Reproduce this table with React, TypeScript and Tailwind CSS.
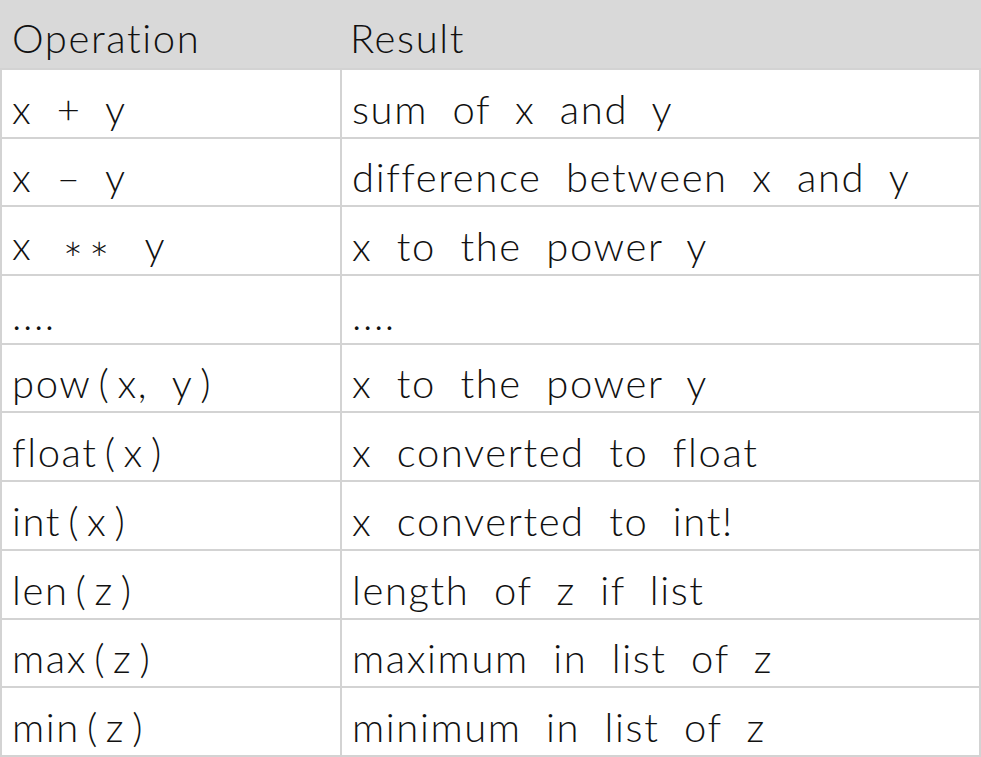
import React from 'react';

// the reference font sets brackets off with extra room
const spaced = (s: string) =>
  s.split(/([()])/).map((part, i) =>
    part === '(' || part === ')' ? (
      <span key={i} className="mx-[7px]">
        {part}
      </span>
    ) : (
      part
    )
  );

const rows: [React.ReactNode, string][] = [
  ['x + y', 'sum of x and y'],
  ['x – y', 'difference between x and y'],
  [
    <>
      x <span className="relative top-[17px] mx-[6px] text-[48px] tracking-[0.12em]">**</span> y
    </>,
    'x to the power y',
  ],
  ['....', '....'],
  [spaced('pow(x, y)'), 'x to the power y'],
  [spaced('float(x)'), 'x converted to float'],
  [spaced('int(x)'), 'x converted to int!'],
  [spaced('len(z)'), 'length of z if list'],
  [spaced('max(z)'), 'maximum in list of z'],
  [spaced('min(z)'), 'minimum in list of z'],
];

const cell = 'bg-white flex items-end pl-[10px] pb-[8px] leading-none whitespace-pre';

export default function App() {
  return (
    <div className="w-[981px] h-[757px] bg-white">
      <div
        className="w-[981px] h-[757px] bg-[#d3d3d3] px-[2px] pb-[2px] grid grid-cols-[338px_1fr] grid-rows-[68px_repeat(10,1fr)] gap-[2px] text-[40px] font-light text-[#111] [word-spacing:0.3em] tracking-[0.04em]"
        style={{ fontFamily: 'Lato, "Noto Sans", sans-serif' }}
      >
        <div className="col-span-2 bg-[#d9d9d9] -mx-[2px] grid grid-cols-[340px_1fr]">
          <div className="flex items-end pl-[12px] pb-[10px] leading-none">Operation</div>
          <div className="flex items-end pl-[10px] pb-[10px] leading-none">Result</div>
        </div>
        {rows.map(([op, res], i) => (
          <React.Fragment key={i}>
            <div className={cell}>
              <span className="leading-none">{op}</span>
            </div>
            <div className={cell}>
              <span className="leading-none">{res}</span>
            </div>
          </React.Fragment>
        ))}
      </div>
    </div>
  );
}
